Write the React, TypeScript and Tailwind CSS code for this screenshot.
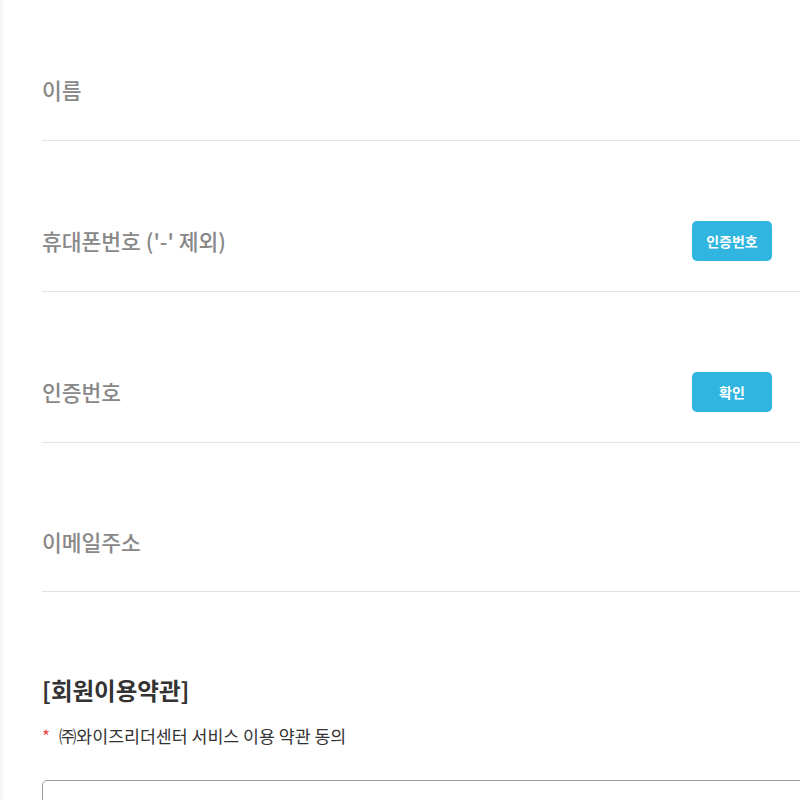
import React from 'react';

const rows = [
  { label: '이름', button: '', pad: 'pt-[70px] pb-[30px]' },
  { label: "휴대폰번호 ('-' 제외)", button: '인증번호', pad: 'pt-[80px] pb-[30px]' },
  { label: '인증번호', button: '확인', pad: 'pt-[80px] pb-[30px]' },
  { label: '이메일주소', button: '', pad: 'pt-[79px] pb-[29px]' },
];

const App = () => {
  return (
    <div
      className="relative w-full h-[800px] overflow-hidden bg-white"
      style={{ fontFamily: '"Noto Sans CJK KR", "Noto Sans", sans-serif' }}
    >
      {/* left edge strip */}
      <div className="absolute left-0 top-0 h-full w-[3px] bg-[#f6f6f6]"></div>

      <div className="pl-[42px]">
        <div className="w-[762px]">
          {/* Form rows */}
          {rows.map((row) => (
            <div
              key={row.label}
              className={`flex items-center justify-between border-b border-[#e3e3e3] ${row.pad}`}
            >
              <div className="h-[40px] flex items-center text-[21.5px] font-medium text-[#888888]">
                {row.label}
              </div>
              {row.button && (
                <button className="mr-[32px] w-[80px] h-[40px] rounded-[5px] bg-[#30b4e0] text-white text-[14px] font-bold">
                  {row.button}
                </button>
              )}
            </div>
          ))}

          {/* Terms */}
          <h2 className="mt-[82px] text-[23.5px] leading-[32px] font-bold text-[#333333]">[회원이용약관]</h2>
          <p className="mt-[18px] flex items-center text-[17.3px] leading-[24px] text-[#333333]">
            <span className="text-[#e5423f] mr-[9px]">*</span>
            ㈜와이즈리더센터 서비스 이용 약관 동의
          </p>
          <textarea
            readOnly
            className="mt-[32px] block w-full h-[160px] rounded-[5px] border border-[#999999] overflow-y-scroll resize-none"
            defaultValue={'\n\n\n\n\n\n\n\n\n\n\n\n\n'}
          />
        </div>
      </div>
    </div>
  );
};

export default App;
